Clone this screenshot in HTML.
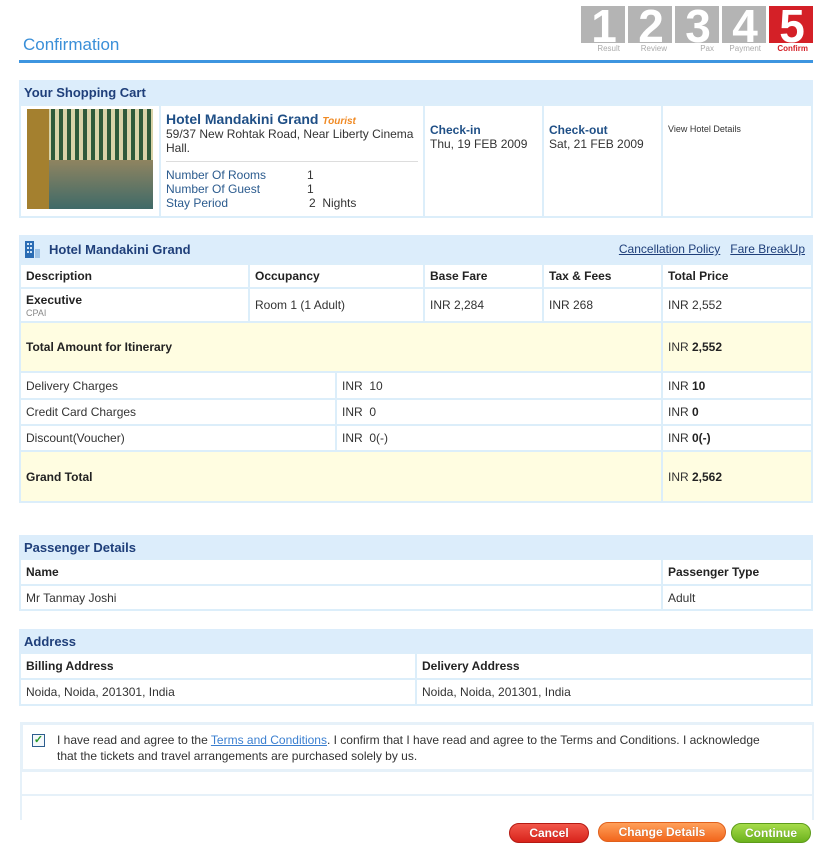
<!DOCTYPE html>
<html><head><meta charset="utf-8"><style>
*{margin:0;padding:0;box-sizing:border-box}
body{width:836px;height:860px;background:#fff;font-family:"Liberation Sans",Tahoma,sans-serif;font-size:12px;color:#333;position:relative;overflow:hidden}
.a{position:absolute}
.bg{position:absolute;background:#dceefa}
.c{position:absolute;background:#fff;padding:0 5px;display:flex;align-items:center;white-space:nowrap}
.y{background:#fffde1}
.h{position:absolute;background:#dcedfb;color:#1f3f7a;font-weight:bold;font-size:13px;padding:0 5px;display:flex;align-items:center}
b{color:#222}
.btn{position:absolute;height:20px;border-radius:10px;color:#fff;font-weight:bold;font-size:12px;display:flex;align-items:center;justify-content:center;text-shadow:0 0 1px rgba(0,0,0,.3)}
.step{position:absolute;top:6px;width:44px;height:37px;background:#b4b4b4;color:#fff;font-weight:bold;font-size:46px;line-height:40px;text-align:center;overflow:hidden;letter-spacing:-2px}
.sl{position:absolute;top:44px;font-size:8px;color:#aaa;text-align:right;width:44px}
a{color:#1f3f7a}
</style></head><body>
<div class="a" style="left:23px;top:35px;font-size:17px;color:#3a8fd8">Confirmation</div>
<div class="a" style="left:19px;top:60px;width:794px;height:3px;background:#3d95e0"></div>
<div class="step" style="left:581px">1</div><div class="sl" style="left:576px">Result</div>
<div class="step" style="left:628px">2</div><div class="sl" style="left:623px">Review</div>
<div class="step" style="left:675px">3</div><div class="sl" style="left:670px">Pax</div>
<div class="step" style="left:722px">4</div><div class="sl" style="left:717px">Payment</div>
<div class="step" style="left:769px;background:#d42027">5</div><div class="sl" style="left:764px;color:#d42027;font-weight:bold">Confirm</div>

<!-- cart -->
<div class="bg" style="left:19px;top:80px;width:794px;height:138px"></div>
<div class="h" style="left:19px;top:80px;width:794px;height:24px">Your Shopping Cart</div>
<div class="c" style="left:21px;top:106px;width:138px;height:110px"></div>
<div class="a" style="left:27px;top:109px;width:126px;height:100px;background:repeating-linear-gradient(90deg,#2f5a3a 0 4px,#d9d3a8 4px 8px)"></div>
<div class="a" style="left:27px;top:160px;width:126px;height:49px;background:linear-gradient(#8f8460,#3f6a68)"></div>
<div class="a" style="left:27px;top:109px;width:22px;height:100px;background:#a4802f"></div>
<div class="c" style="left:161px;top:106px;width:262px;height:110px;display:block;padding-top:5px;white-space:normal">
<div style="font-size:14px;font-weight:bold;color:#1f4f86">Hotel Mandakini Grand <span style="font-size:10px;color:#f08a24;font-style:italic">Tourist</span></div>
<div style="line-height:14px">59/37 New Rohtak Road, Near Liberty Cinema Hall.</div>
<div style="border-top:1px solid #ddd;margin:6px 0 6px;width:252px"></div>
<div style="color:#2b5b8e;line-height:14px;position:relative">Number Of Rooms<span class="a" style="left:141px;color:#333">1</span><br>Number Of Guest<span class="a" style="left:141px;top:14px;color:#333">1</span><br>Stay Period<span class="a" style="left:143px;top:28px;color:#333">2&nbsp; Nights</span></div>
</div>
<div class="c" style="left:425px;top:106px;width:117px;height:110px;display:block;padding-top:17px;line-height:14px"><b style="color:#1f4f86">Check-in</b><br>Thu, 19 FEB 2009</div>
<div class="c" style="left:544px;top:106px;width:117px;height:110px;display:block;padding-top:17px;line-height:14px"><b style="color:#1f4f86">Check-out</b><br>Sat, 21 FEB 2009</div>
<div class="c" style="left:663px;top:106px;width:148px;height:110px;display:block;padding-top:18px;font-size:9px"><a style="color:#333">View Hotel Details</a></div>

<!-- hotel table -->
<div class="bg" style="left:19px;top:235px;width:794px;height:268px"></div>
<div class="h" style="left:19px;top:235px;width:794px;height:28px"><svg width="16" height="17" style="margin:0 8px 0 1px" viewBox="0 0 16 17"><rect x="0" y="0" width="9" height="17" fill="#2a6cb4"/><rect x="2" y="2" width="2" height="2" fill="#cfe4f7"/><rect x="5" y="2" width="2" height="2" fill="#cfe4f7"/><rect x="2" y="6" width="2" height="2" fill="#cfe4f7"/><rect x="5" y="6" width="2" height="2" fill="#cfe4f7"/><rect x="2" y="10" width="2" height="2" fill="#cfe4f7"/><rect x="5" y="10" width="2" height="2" fill="#cfe4f7"/><rect x="10" y="8" width="5" height="9" fill="#9ec3e6"/></svg>Hotel Mandakini Grand
<span class="a" style="right:8px;font-weight:normal;font-size:12px"><a style="text-decoration:underline">Cancellation Policy</a>&nbsp;&nbsp; <a style="text-decoration:underline">Fare BreakUp</a></span></div>
<div class="c" style="left:21px;top:265px;width:227px;height:22px"><b>Description</b></div>
<div class="c" style="left:250px;top:265px;width:173px;height:22px"><b>Occupancy</b></div>
<div class="c" style="left:425px;top:265px;width:117px;height:22px"><b>Base Fare</b></div>
<div class="c" style="left:544px;top:265px;width:117px;height:22px"><b>Tax &amp; Fees</b></div>
<div class="c" style="left:663px;top:265px;width:148px;height:22px"><b>Total Price</b></div>
<div class="c" style="left:21px;top:289px;width:227px;height:32px;display:block;padding-top:5px;line-height:12px"><b>Executive</b><br><span style="font-size:9px;color:#888">CPAI</span></div>
<div class="c" style="left:250px;top:289px;width:173px;height:32px">Room 1 (1 Adult)</div>
<div class="c" style="left:425px;top:289px;width:117px;height:32px">INR 2,284</div>
<div class="c" style="left:544px;top:289px;width:117px;height:32px">INR 268</div>
<div class="c" style="left:663px;top:289px;width:148px;height:32px">INR 2,552</div>
<div class="c y" style="left:21px;top:323px;width:640px;height:48px"><b>Total Amount for Itinerary</b></div>
<div class="c y" style="left:663px;top:323px;width:148px;height:48px">INR&nbsp;<b>2,552</b></div>
<div class="c" style="left:21px;top:373px;width:314px;height:25px">Delivery Charges</div>
<div class="c" style="left:337px;top:373px;width:324px;height:25px">INR&nbsp; 10</div>
<div class="c" style="left:663px;top:373px;width:148px;height:25px">INR&nbsp; <b>10</b></div>
<div class="c" style="left:21px;top:400px;width:314px;height:24px">Credit Card Charges</div>
<div class="c" style="left:337px;top:400px;width:324px;height:24px">INR&nbsp; 0</div>
<div class="c" style="left:663px;top:400px;width:148px;height:24px">INR&nbsp; <b>0</b></div>
<div class="c" style="left:21px;top:426px;width:314px;height:24px">Discount(Voucher)</div>
<div class="c" style="left:337px;top:426px;width:324px;height:24px">INR&nbsp; 0(-)</div>
<div class="c" style="left:663px;top:426px;width:148px;height:24px">INR&nbsp; <b>0(-)</b></div>
<div class="c y" style="left:21px;top:452px;width:640px;height:49px"><b>Grand Total</b></div>
<div class="c y" style="left:663px;top:452px;width:148px;height:49px">INR&nbsp;<b>2,562</b></div>

<!-- passenger -->
<div class="bg" style="left:19px;top:535px;width:794px;height:76px"></div>
<div class="h" style="left:19px;top:535px;width:794px;height:24px">Passenger Details</div>
<div class="c" style="left:21px;top:560px;width:640px;height:24px"><b>Name</b></div>
<div class="c" style="left:663px;top:560px;width:148px;height:24px"><b>Passenger Type</b></div>
<div class="c" style="left:21px;top:586px;width:640px;height:23px">Mr Tanmay Joshi</div>
<div class="c" style="left:663px;top:586px;width:148px;height:23px">Adult</div>

<!-- address -->
<div class="bg" style="left:19px;top:629px;width:794px;height:77px"></div>
<div class="h" style="left:19px;top:629px;width:794px;height:24px">Address</div>
<div class="c" style="left:21px;top:654px;width:394px;height:24px"><b>Billing Address</b></div>
<div class="c" style="left:417px;top:654px;width:394px;height:24px"><b>Delivery Address</b></div>
<div class="c" style="left:21px;top:680px;width:394px;height:24px">Noida, Noida, 201301, India</div>
<div class="c" style="left:417px;top:680px;width:394px;height:24px">Noida, Noida, 201301, India</div>

<!-- terms -->
<div class="bg" style="left:20px;top:722px;width:794px;height:98px;background:#e6f1f9"></div>
<div class="c" style="left:23px;top:725px;width:789px;height:44px;display:block;padding:7px 50px 0 34px;white-space:normal;line-height:16px">
<span class="a" style="left:9px;top:9px;width:13px;height:13px;border:1px solid #2d5d8e;background:#f4f8fb;color:#2a9a2a;font-size:11px;line-height:11px;text-align:center;font-weight:bold">✓</span>
I have read and agree to the <a style="color:#3a7fd0;text-decoration:underline">Terms and Conditions</a>. I confirm that I have read and agree to the Terms and Conditions. I acknowledge that the tickets and travel arrangements are purchased solely by us.</div>
<div class="c" style="left:22px;top:772px;width:790px;height:22px"></div>
<div class="c" style="left:22px;top:796px;width:790px;height:24px"></div>

<div class="btn" style="left:509px;top:823px;width:80px;background:linear-gradient(#f2574a,#d8231b);border:1px solid #b51a13">Cancel</div>
<div class="btn" style="left:598px;top:822px;width:128px;background:linear-gradient(#ffa05a,#f2661c);border:1px solid #e0601c">Change Details</div>
<div class="btn" style="left:731px;top:823px;width:80px;background:linear-gradient(#a6dc4a,#6cb21e);border:1px solid #5d9c1a">Continue</div>
</body></html>
